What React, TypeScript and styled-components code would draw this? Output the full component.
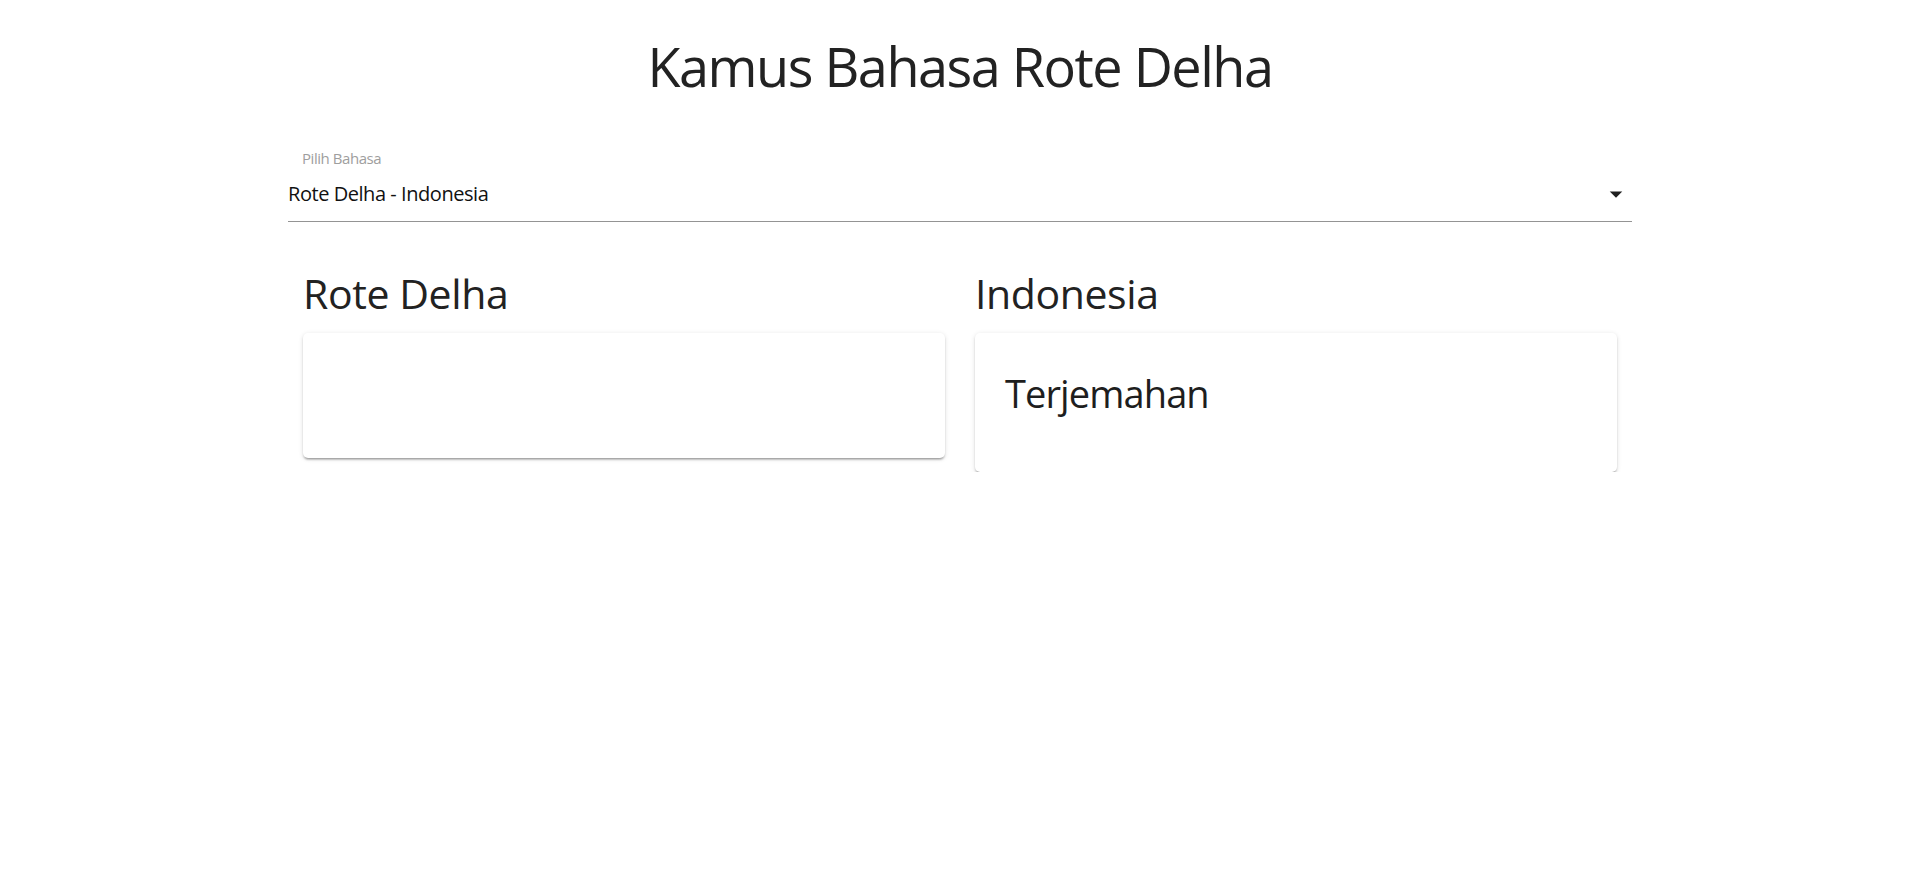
import React from "react";
import styled, { createGlobalStyle } from "styled-components";

const GlobalStyle = createGlobalStyle`
  html, body {
    margin: 0;
    padding: 0;
    background: #ffffff;
  }
  body {
    font-family: "Open Sans", "Noto Sans", sans-serif;
    color: rgba(0, 0, 0, 0.87);
  }
`;

const Page = styled.div`
  width: 1344px;
  margin: 0 auto;
  padding-top: 38px;
`;

const Title = styled.h1`
  margin: 0;
  font-size: 54px;
  line-height: 57px;
  font-weight: 400;
  text-align: center;
  color: #222222;
  letter-spacing: -1.5px;
`;

const Field = styled.div`
  margin-top: 56px;
  display: flex;
  flex-direction: column;
  border-bottom: 1px solid #949494;
`;

const FieldLabel = styled.label`
  font-size: 15px;
  line-height: 15px;
  color: #9e9e9e;
  padding-left: 14px;
  letter-spacing: -0.45px;
`;

const SelectRow = styled.div`
  margin-top: 13px;
  padding-bottom: 12px;
  display: flex;
  align-items: center;
  justify-content: space-between;
  height: 30px;
`;

const SelectValue = styled.span`
  font-size: 20px;
  line-height: 20px;
  color: #111111;
  letter-spacing: -0.45px;
`;

const ArrowIcon = styled.svg`
  width: 30px;
  height: 30px;
  margin-right: 1px;
  fill: #1f1f1f;
  display: block;
`;

const Columns = styled.div`
  margin-top: 51px;
  padding: 0 15px;
  display: grid;
  grid-template-columns: 1fr 1fr;
  column-gap: 30px;
  align-items: start;
`;

const Column = styled.section`
  display: flex;
  flex-direction: column;
`;

const Heading = styled.h2`
  margin: 0 0 19px 0;
  font-size: 41px;
  line-height: 41px;
  font-weight: 400;
  color: #222222;
  letter-spacing: -0.4px;
`;

const Card = styled.div<{ $minHeight?: number }>`
  background: #ffffff;
  border-radius: 5px;
  box-shadow: 0px 3px 2px -2px rgba(0, 0, 0, 0.24),
    0px 2px 2px 0px rgba(0, 0, 0, 0.14), 0px 1px 5px 0px rgba(0, 0, 0, 0.12);
  min-height: ${(p) => (p.$minHeight ? `${p.$minHeight}px` : "auto")};
  box-sizing: border-box;
`;

const CardContent = styled.div`
  padding: 41px 30px 59px 30px;
`;

const Translation = styled.div`
  font-size: 38px;
  line-height: 39px;
  color: #1e1e1e;
  letter-spacing: -0.9px;
`;

export default function App() {
  return (
    <>
      <GlobalStyle />
      <Page>
        <Title>Kamus Bahasa Rote Delha</Title>
        <Field>
          <FieldLabel>Pilih Bahasa</FieldLabel>
          <SelectRow>
            <SelectValue>Rote Delha - Indonesia</SelectValue>
            <ArrowIcon viewBox="0 0 24 24" aria-hidden="true">
              <path d="M7 10l5 5 5-5z" />
            </ArrowIcon>
          </SelectRow>
        </Field>
        <Columns>
          <Column>
            <Heading>Rote Delha</Heading>
            <Card $minHeight={125} />
          </Column>
          <Column>
            <Heading>Indonesia</Heading>
            <Card>
              <CardContent>
                <Translation>Terjemahan</Translation>
              </CardContent>
            </Card>
          </Column>
        </Columns>
      </Page>
    </>
  );
}
